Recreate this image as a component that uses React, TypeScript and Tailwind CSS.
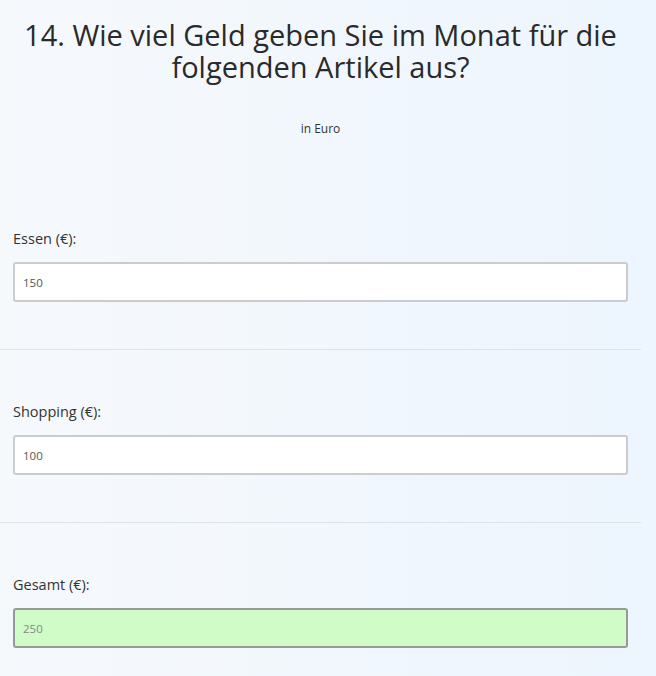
const fields = [
  { label: 'Essen (€):', value: '150' },
  { label: 'Shopping (€):', value: '100' },
];

function Field({ label, value, total }: { label: string; value: string; total?: boolean }) {
  return (
    <div className="px-[13px]">
      <label className="block text-[14.5px] leading-[20px] text-[#333]">{label}</label>
      <input
        readOnly
        value={value}
        className={
          total
            ? 'mt-[13px] block w-full h-[40px] rounded-[3px] border-2 border-[#999] bg-[#d0fcc8] px-[8px] text-[11.5px] text-[#888] outline-none'
            : 'mt-[13px] block w-full h-[40px] rounded-[3px] border-2 border-[#ccc] bg-white px-[8px] text-[11.5px] text-[#555] outline-none'
        }
        style={{ fontFamily: 'inherit' }}
      />
    </div>
  );
}

export default function App() {
  return (
    <div
      className="w-[656px] h-[676px] overflow-hidden bg-gradient-to-r from-[#f6f9fc] to-[#edf5fe]"
      style={{ fontFamily: '"Open Sans", "Liberation Sans", sans-serif' }}
    >
      <div className="w-[641px]">
        {/* Question header */}
        <h1 className="pt-[19px] text-center text-[29px] leading-[32px] font-normal text-[#2a2a2a] px-[10px]">
          14. Wie viel Geld geben Sie im Monat für die folgenden Artikel aus?
        </h1>
        <p className="mt-[37px] text-center text-[12px] leading-[18px] text-[#333]">in Euro</p>

        <div className="pt-[91px]">
          <Field label={fields[0].label} value={fields[0].value} />
        </div>
        <div className="mt-[47px] border-t border-[#dde3e8]" />
        <div className="pt-[52px]">
          <Field label={fields[1].label} value={fields[1].value} />
        </div>
        <div className="mt-[47px] border-t border-[#dde3e8]" />
        <div className="pt-[52px]">
          <Field label="Gesamt (€):" value="250" total />
        </div>
      </div>
    </div>
  );
}
